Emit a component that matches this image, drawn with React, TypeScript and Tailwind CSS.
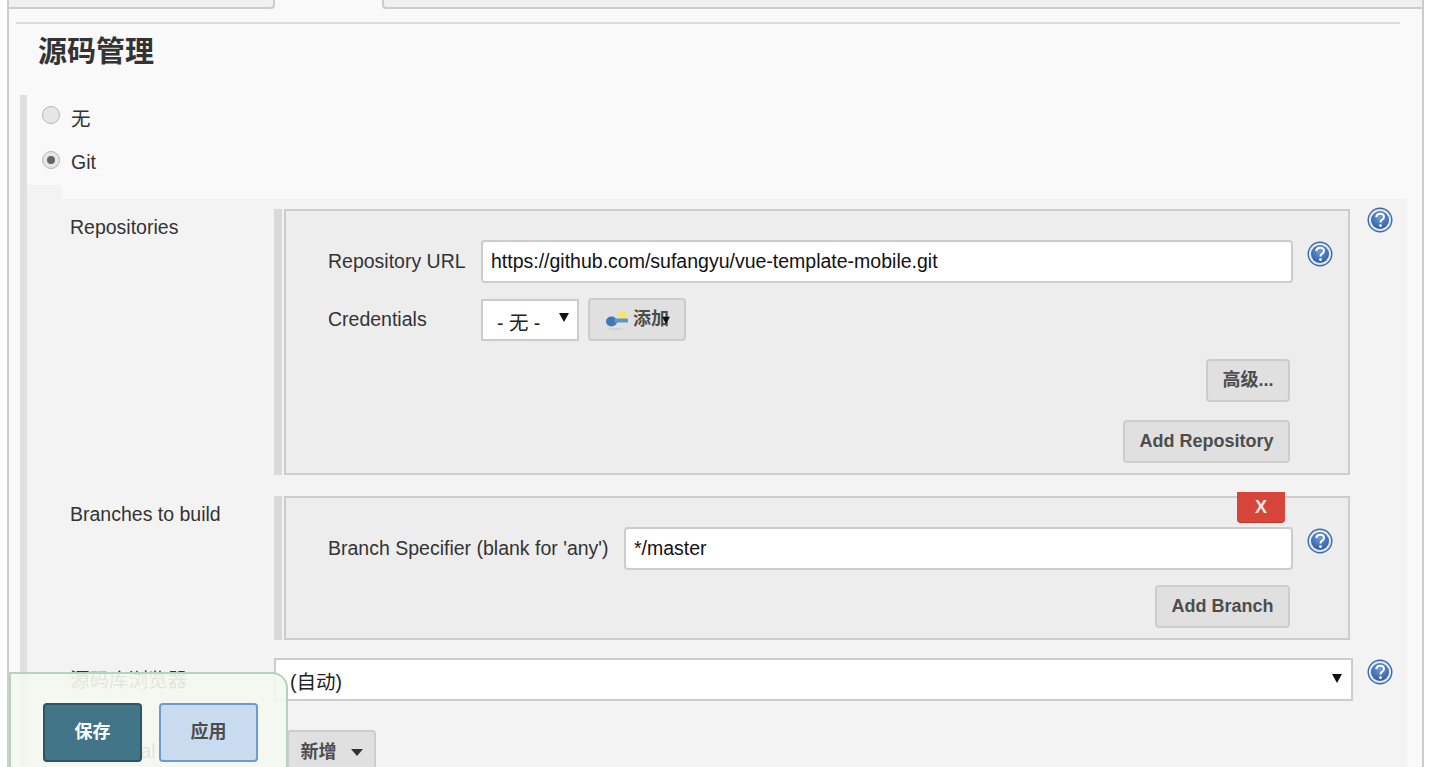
const labelText = "text-[19.5px] leading-6 text-[#333]";
const fieldClass =
  "h-[43px] rounded-[4px] border-2 border-[#ccc] bg-white px-2 text-[19.5px] text-[#111] outline-none";
const btnClass =
  "flex items-center justify-center rounded-[4px] border-2 border-[#ccc] bg-[#e0e0e0] text-[18px] font-bold text-[#4d4d4d]";

const HelpIcon = ({ id }: { id: string }) => (
  <svg width="26" height="26" viewBox="0 0 26 26" className="shrink-0">
    <defs>
      <radialGradient id={id} cx="50%" cy="35%" r="70%">
        <stop offset="0%" stopColor="#6f9bd6" />
        <stop offset="100%" stopColor="#2a5a9e" />
      </radialGradient>
    </defs>
    <circle cx="13" cy="13" r="11.8" fill="#dfe8f3" stroke="#3d6aa5" strokeWidth="1.4" />
    <circle cx="13" cy="13" r="9" fill={`url(#${id})`} />
    <path
      d="M9.2 10.2c.3-2.3 1.9-3.4 3.9-3.4 2.2 0 3.8 1.2 3.8 3.1 0 1.5-.9 2.3-2 3-.9.6-1.3 1-1.3 2v.5"
      fill="none"
      stroke="#fff"
      strokeWidth="2"
    />
    <circle cx="13.5" cy="18.6" r="1.4" fill="#fff" />
  </svg>
);

const Arrow = ({ className }: { className?: string }) => (
  <svg width="10" height="10" viewBox="0 0 10 10" className={className}>
    <path d="M0 1h10L5 10z" fill="#111" />
  </svg>
);

const KeyIcon = () => (
  <svg width="24" height="24" viewBox="0 0 24 24" className="shrink-0">
    <ellipse cx="10" cy="21" rx="8" ry="1" fill="#cfd3d8" />
    <circle cx="17.5" cy="7" r="4.5" fill="#f3e86d" />
    <ellipse cx="6.5" cy="13.5" rx="5.5" ry="5" fill="#3f78b5" />
    <rect x="9" y="10.5" width="14" height="4" rx="1" fill="#5f93c9" />
  </svg>
);

const Bar = () => <div className="w-2 shrink-0 bg-[#d9d9d9]" />;

export default function App() {
  return (
    <div
      className="relative h-[767px] overflow-hidden bg-white"
      style={{ fontFamily: '"Liberation Sans", "Noto Sans CJK SC", sans-serif' }}
    >
      <div className="mx-[7px] h-full border-x-2 border-[#ccc] bg-[#f9f9f9]">
        {/* tabs */}
        <div className="flex h-[9px]">
          <div className="w-[266px] rounded-br-[4px] border-r-2 border-b-2 border-[#ccc] bg-[#f0f0f0]" />
          <div className="w-[107px]" />
          <div className="flex-1 rounded-bl-[4px] border-b-2 border-l-2 border-[#ccc] bg-[#f0f0f0]" />
        </div>

        <div className="mt-[13px] ml-[7px] mr-[22px] h-[2px] bg-[#dcdcdc]" />

        <h2 className="mt-[9px] ml-[29px] h-[38px] text-[29px] leading-[38px] font-bold text-[#333]">
          源码管理
        </h2>

        {/* radio block */}
        <div className="mt-[24px] ml-[11px] flex border-l-[7px] border-[#e0e0e0]">
          <div className="min-w-0 flex-1">
            <div className="flex h-[90px] flex-col pt-[11px] pl-[15px]">
              <div className="flex h-[45px] shrink-0 gap-[11px]">
                <span className="h-[18px] w-[18px] rounded-full border border-[#b5b5b5] bg-[#e6e6e6]" />
                <span className={`${labelText} mt-[1px]`}>无</span>
              </div>
              <div className="flex h-[34px] shrink-0 gap-[11px]">
                <span className="flex h-[18px] w-[18px] items-center justify-center rounded-full border border-[#b5b5b5] bg-[#e6e6e6]">
                  <span className="h-[8px] w-[8px] rounded-full bg-[#666]" />
                </span>
                <span className={`${labelText} mt-[-1px]`}>Git</span>
              </div>
            </div>

            <div className="flex">
              <div className="w-[35px] shrink-0 bg-[#f3f3f3]" />
              <div className="mt-[14px] mr-[15px] min-w-0 flex-1 bg-[#f3f3f3] pt-[10px]">
                {/* Repositories */}
                <div className="flex">
                  <div className={`${labelText} w-[212px] shrink-0 pt-[6px] pl-2`}>Repositories</div>
                  <Bar />
                  <div className="ml-[2px] h-[266px] w-[1066px] shrink-0 border-2 border-[#ccc] bg-[#ededed] pt-[29px] pl-[42px]">
                    <div className="flex items-start">
                      <span className={`${labelText} mt-[9px] w-[153px] shrink-0`}>Repository URL</span>
                      <input
                        readOnly
                        value="https://github.com/sufangyu/vue-template-mobile.git"
                        className={`${fieldClass} w-[812px]`}
                      />
                      <span className="mt-[1px] ml-[14px]">
                        <HelpIcon id="h1" />
                      </span>
                    </div>
                    <div className="mt-[16px] flex items-start">
                      <span className={`${labelText} mt-[8px] w-[153px] shrink-0`}>Credentials</span>
                      <div className="relative flex h-[42px] w-[98px] items-center border-2 border-[#ccc] bg-white pt-2 pl-[14px] text-[19.5px] text-[#222]">
                        - 无 -
                        <Arrow className="absolute top-[11px] right-[8px]" />
                      </div>
                      <div className={`${btnClass} relative mt-[-1px] ml-[9px] h-[43px] w-[98px] justify-start gap-[4px] pl-[15px] font-normal`}>
                        <KeyIcon />
                        <span className="font-bold">添加</span>
                        <Arrow className="absolute top-[16px] right-[14px] h-2 w-2" />
                      </div>
                    </div>
                    <div className="mt-[18px] flex w-[962px] justify-end">
                      <div className={`${btnClass} h-[43px] w-[84px]`}>高级...</div>
                    </div>
                    <div className="mt-[18px] flex w-[962px] justify-end">
                      <div className={`${btnClass} h-[43px] w-[167px]`}>Add Repository</div>
                    </div>
                  </div>
                </div>

                {/* Branches */}
                <div className="mt-[21px] flex">
                  <div className={`${labelText} w-[212px] shrink-0 pt-[6px] pl-2`}>Branches to build</div>
                  <Bar />
                  <div className="relative ml-[2px] h-[144px] w-[1066px] shrink-0 border-2 border-[#ccc] bg-[#ededed] pt-[29px] pl-[42px]">
                    <div className="absolute top-[-6px] right-[63px] flex h-[31px] w-[48px] items-center justify-center rounded-b-[4px] border-b border-[#b9392f] bg-[#d6443a] text-[18px] font-bold text-[#fbe9e5]">
                      X
                    </div>
                    <div className="flex items-start">
                      <span className={`${labelText} mt-[9px] w-[296px] shrink-0`}>
                        Branch Specifier (blank for 'any')
                      </span>
                      <input readOnly value="*/master" className={`${fieldClass} w-[669px]`} />
                      <span className="mt-[1px] ml-[14px]">
                        <HelpIcon id="h2" />
                      </span>
                    </div>
                    <div className="mt-[15px] flex w-[962px] justify-end">
                      <div className={`${btnClass} h-[43px] w-[135px]`}>Add Branch</div>
                    </div>
                  </div>
                </div>

                {/* browser */}
                <div className="mt-[18px] flex">
                  <div className={`${labelText} w-[212px] shrink-0 pt-[10px] pl-2`}>源码库浏览器</div>
                  <div className="relative flex h-[43px] w-[1079px] shrink-0 items-center border-2 border-[#ccc] bg-white pt-[6px] pl-[14px] text-[19.5px] text-[#222]">
                    (自动)
                    <Arrow className="absolute top-[13px] right-[9px]" />
                  </div>
                </div>

                {/* additional */}
                <div className="mt-[29px] flex">
                  <div className={`${labelText} w-[225px] shrink-0 pt-[9px] pl-2`}>Additional</div>
                  <div className={`${btnClass} h-[44px] w-[89px] gap-[14px]`}>
                    新增
                    <svg width="12" height="7" viewBox="0 0 12 7">
                      <path d="M0 0h12L6 7z" fill="#333" />
                    </svg>
                  </div>
                </div>
              </div>
            </div>
          </div>
        </div>
      </div>

      {/* help icons of the outer column */}
      <span className="absolute top-[207px] left-[1367px]">
        <HelpIcon id="h3" />
      </span>
      <span className="absolute top-[659px] left-[1367px]">
        <HelpIcon id="h4" />
      </span>

      {/* sticky save bar */}
      <div className="absolute top-[672px] left-[9px] flex h-[110px] w-[279px] gap-[17px] rounded-tr-[16px] border-2 border-[#b0d4bd] bg-[#f5f8f0]/90 pt-[29px] pl-[32px]">
        <div className="flex h-[59px] w-[99px] items-center justify-center rounded-[4px] border-2 border-[#2d5566] bg-[#437589] text-[18px] font-bold text-white">
          保存
        </div>
        <div className="flex h-[59px] w-[99px] items-center justify-center rounded-[4px] border-2 border-[#6c9bcf] bg-[#c9dcef] text-[18px] font-bold text-[#4d4d4d]">
          应用
        </div>
      </div>
    </div>
  );
}
